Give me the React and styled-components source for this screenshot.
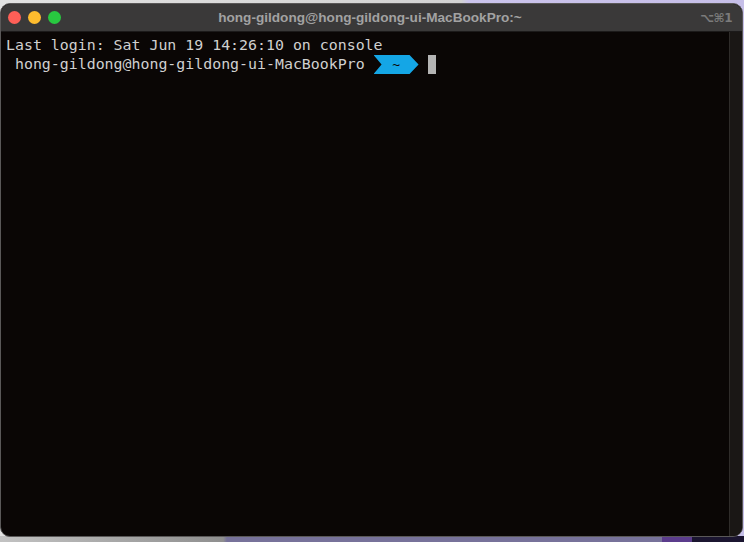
import React from "react";
import styled, { createGlobalStyle } from "styled-components";

const GlobalStyle = createGlobalStyle`
  html, body {
    margin: 0;
    padding: 0;
    width: 744px;
    height: 542px;
    overflow: hidden;
    background: #c9c2ea;
  }
`;

const Desktop = styled.div`
  width: 744px;
  height: 542px;
  box-sizing: border-box;
  padding: 3px 1px 5px 0;
  display: flex;
  background:
    linear-gradient(90deg, #c2c2c2 0, #8f8f8f 30%, #77729a 30.5%, #77729a 89%, #5b3c8c 89%, #5b3c8c 93%, #1b1530 93%) bottom / 100% 6px no-repeat,
    linear-gradient(90deg, #e2e2e2 0, #d2d2d2 62%, #cbc4ec 63%, #c6bfe8 100%);
`;

const Window = styled.div`
  flex: 1;
  display: flex;
  flex-direction: column;
  border-radius: 10px;
  overflow: hidden;
  border: 1px solid #5a5858;
  background: #0a0605;
`;

const TitleBar = styled.div`
  height: 27px;
  flex: none;
  display: grid;
  grid-template-columns: 1fr auto 1fr;
  align-items: center;
  padding: 0 10px 0 7px;
  background: #3a3939;
  border-bottom: 1px solid #1c1a1a;
`;

const Lights = styled.div`
  display: flex;
  gap: 7px;
`;

const Light = styled.span`
  width: 13px;
  height: 13px;
  border-radius: 50%;
  background: ${(p) => p.color};
`;

const Title = styled.div`
  font-family: "Liberation Sans", Arial, sans-serif;
  font-weight: bold;
  font-size: 13.6px;
  color: #a2a2a2;
`;

const Shortcut = styled.div`
  justify-self: end;
  font-family: "DejaVu Sans", sans-serif;
  font-size: 12px;
  font-weight: bold;
  color: #7b7b7b;
  letter-spacing: -0.5px;
`;

const Body = styled.div`
  flex: 1;
  display: flex;
`;

const Screen = styled.div`
  flex: 1;
  padding: 4px 5px;
  font-family: "DejaVu Sans Mono", monospace;
  font-size: 14.9px;
  line-height: 19px;
  color: #d0d0d0;
  white-space: pre;
`;

const Line = styled.div`
  display: flex;
  align-items: center;
  height: 19px;
`;

const Segment = styled.span`
  display: inline-flex;
  align-items: center;
  justify-content: center;
  width: 45px;
  height: 19px;
  background: #14a6e6;
  color: #0a0605;
  font-size: 13px;
  clip-path: polygon(0 0, 36px 0, 45px 50%, 36px 100%, 0 100%, 8px 50%);
`;

const Cursor = styled.span`
  display: inline-block;
  width: 8px;
  height: 19px;
  margin-left: 9px;
  background: #b4b4b4;
`;

const Scrollbar = styled.div`
  width: 12px;
  flex: none;
  background: #1a1715;
  border-left: 1px solid #2f2c2a;
`;

export default function App() {
  return (
    <>
      <GlobalStyle />
      <Desktop>
        <Window>
          <TitleBar>
            <Lights>
              <Light color="#fe5f57" />
              <Light color="#febc2e" />
              <Light color="#28c840" />
            </Lights>
            <Title>hong-gildong@hong-gildong-ui-MacBookPro:~</Title>
            <Shortcut>⌥⌘1</Shortcut>
          </TitleBar>
          <Body>
            <Screen>
              <Line>Last login: Sat Jun 19 14:26:10 on console</Line>
              <Line>
                {" hong-gildong@hong-gildong-ui-MacBookPro "}
                <Segment>~</Segment>
                <Cursor />
              </Line>
            </Screen>
            <Scrollbar />
          </Body>
        </Window>
      </Desktop>
    </>
  );
}
